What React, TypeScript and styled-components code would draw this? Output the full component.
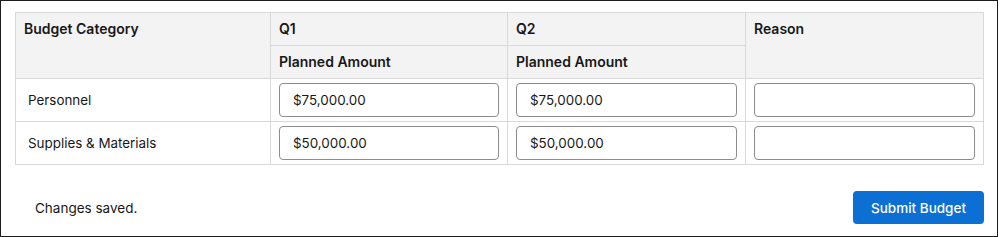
import styled, { createGlobalStyle } from 'styled-components';

const GlobalStyle = createGlobalStyle`
  * { box-sizing: border-box; }
  body {
    margin: 0;
    background: #fff;
    font-family: Inter, "Liberation Sans", Arial, sans-serif;
    color: #181818;
  }
`;

interface BudgetRow {
  category: string;
  q1: string;
  q2: string;
  reason: string;
}

const rows: BudgetRow[] = [
  { category: 'Personnel', q1: '$75,000.00', q2: '$75,000.00', reason: '' },
  { category: 'Supplies & Materials', q1: '$50,000.00', q2: '$50,000.00', reason: '' },
];

export default function App() {
  return (
    <>
      <GlobalStyle />
      <Frame>
        <Table>
          <colgroup>
            <col style={{ width: 255 }} />
            <col style={{ width: 237 }} />
            <col style={{ width: 238 }} />
            <col style={{ width: 238 }} />
          </colgroup>
          <thead>
            <tr>
              <HeadCell rowSpan={2}>Budget Category</HeadCell>
              <HeadCell>Q1</HeadCell>
              <HeadCell>Q2</HeadCell>
              <HeadCell rowSpan={2}>Reason</HeadCell>
            </tr>
            <tr>
              <HeadCell>Planned Amount</HeadCell>
              <HeadCell>Planned Amount</HeadCell>
            </tr>
          </thead>
          <tbody>
            {rows.map((row) => (
              <tr key={row.category}>
                <LabelCell>{row.category}</LabelCell>
                <InputCell>
                  <AmountInput defaultValue={row.q1} />
                </InputCell>
                <InputCell>
                  <AmountInput defaultValue={row.q2} />
                </InputCell>
                <InputCell>
                  <AmountInput defaultValue={row.reason} />
                </InputCell>
              </tr>
            ))}
          </tbody>
        </Table>
        <Footer>
          <Status>Changes saved.</Status>
          <SubmitButton type="button">Submit Budget</SubmitButton>
        </Footer>
      </Frame>
    </>
  );
}

const Frame = styled.div`
  width: 998px;
  height: 237px;
  border: 1px solid #1c1c1c;
  padding: 11px 14px 0 14px;
`;

const Table = styled.table`
  width: 968px;
  table-layout: fixed;
  border-collapse: collapse;
  font-size: 13.4px;
`;

const HeadCell = styled.th`
  background: #f3f3f3;
  border: 1px solid #d9d9d9;
  text-align: left;
  vertical-align: top;
  font-size: 14px;
  font-weight: 600;
  height: 33px;
  padding: 8px 8px 0 8px;
  line-height: 16px;
`;

const LabelCell = styled.td`
  border: 1px solid #d9d9d9;
  padding: 0 12px;
  height: 43px;
  vertical-align: middle;
`;

const InputCell = styled.td`
  border: 1px solid #d9d9d9;
  padding: 4px 8px;
  vertical-align: middle;
`;

const AmountInput = styled.input`
  display: block;
  width: 100%;
  height: 34px;
  border: 1px solid #8c8c8c;
  border-radius: 4px;
  padding: 0 13px;
  font-family: inherit;
  font-size: 13.4px;
  color: #181818;
  background: #fff;
  outline: none;
`;

const Footer = styled.div`
  display: flex;
  align-items: center;
  justify-content: space-between;
  margin-top: 26px;
  padding-left: 20px;
`;

const Status = styled.span`
  font-size: 13.5px;
  color: #181818;
`;

const SubmitButton = styled.button`
  height: 33px;
  padding: 0 18px;
  margin-right: -1px;
  border: none;
  border-radius: 4px;
  background: #0b6fd3;
  color: #fff;
  font-family: inherit;
  font-size: 13.5px;
  font-weight: 500;
  cursor: pointer;
`;
